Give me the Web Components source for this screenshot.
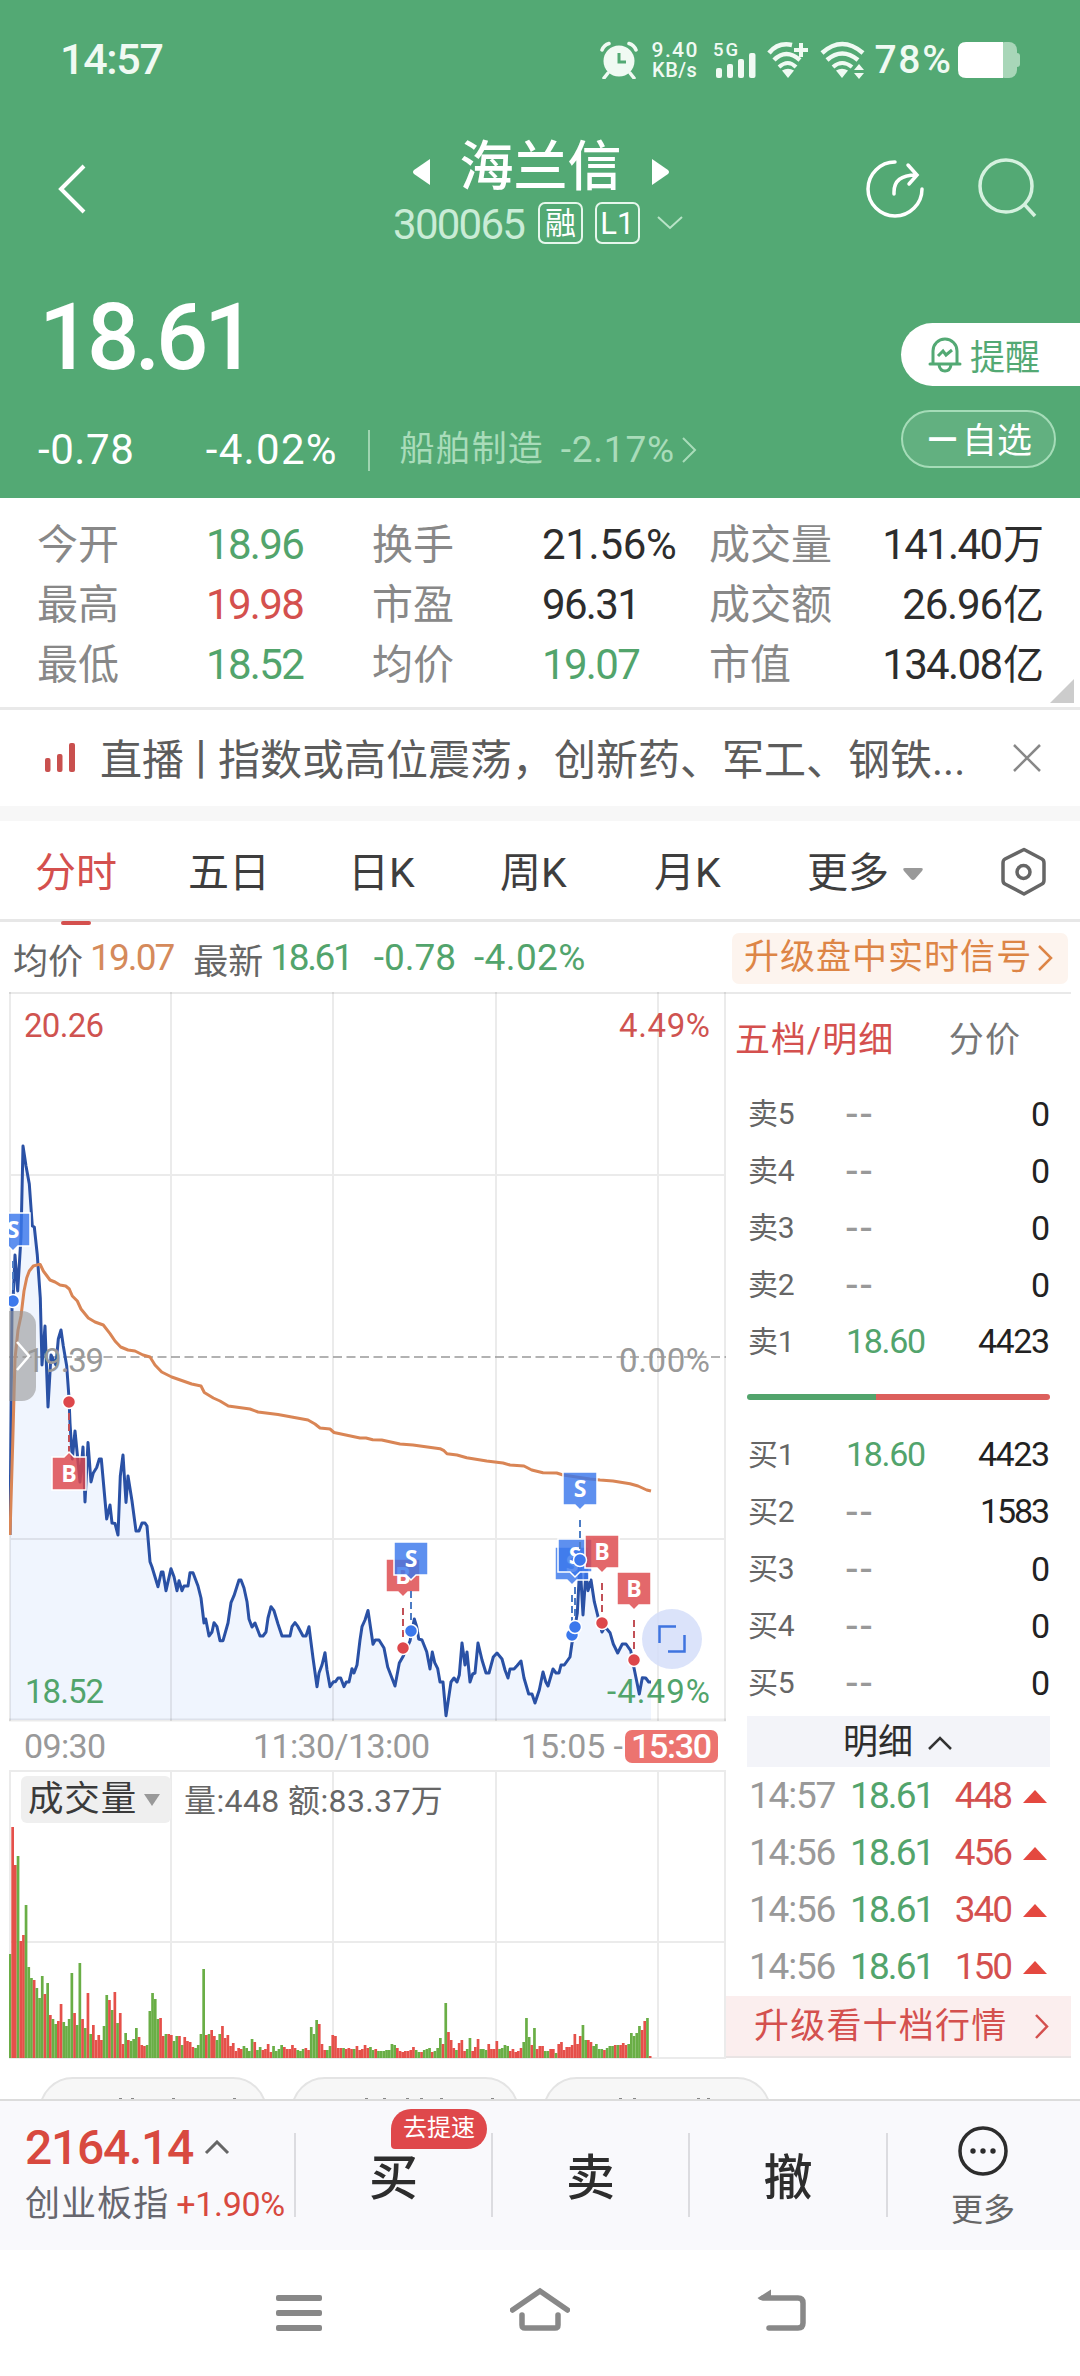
<!DOCTYPE html>
<html lang="zh-CN">
<head>
<meta charset="utf-8">
<title>海兰信 300065</title>
<style>
html, body {
    margin: 0;
    background: #fff;
}
body {
    width: 1080px;
    height: 2376px;
    overflow: hidden;
    font-family: Roboto, "Noto Sans CJK SC", sans-serif;
    --green: #53a974;
    --rise: #d4504e;
    --fall: #52a46c;
    --line: #e9e9e9;
}
</style>
</head>
<body>
<stock-page></stock-page>

<script>
// Shared base: subclasses only supply css() and html().
class BaseElement extends HTMLElement{
    constructor(){
        super();
        this.attachShadow({mode:"open"});
    }
    connectedCallback(){
        this.shadowRoot.innerHTML = `<style>
            * { box-sizing: border-box; }
            svg { display: block; flex: none; }
            ${this.css()}
            </style>${this.html()}`;
    }
    css(){ return ""; }
    html(){ return ""; }
}

// Text whose letter spacing is adjusted until it is "w" pixels wide.
class FitText extends BaseElement{
    css(){
        return `:host { display: inline-block; width: max-content; white-space: nowrap; flex: none; line-height: 1.2; }`;
    }
    html(){ return `<slot></slot>`; }
    connectedCallback(){
        super.connectedCallback();
        const size = parseFloat(this.getAttribute("size"));
        this.style.fontSize = size + "px";
        const target = parseFloat(this.getAttribute("w")) + size * 0.09;
        const count = this.textContent.length;
        const spacing = (target - this.getBoundingClientRect().width) / (count - 1);
        this.style.letterSpacing = spacing + "px";
        this.style.marginRight = -spacing + "px";
    }
}
customElements.define("fit-text", FitText);

class StatusBar extends BaseElement{
    css(){
        return `
        :host { display: flex; height: 120px; align-items: center; color: #f0faf3; padding: 0 59px 0 60px; font-weight: 500; }
        .spacer { flex: 1; }
        .speed { display: flex; flex-direction: column; align-items: center; width: 48px; margin: 0 15px 0 12px; line-height: 20px; }
        .speed fit-text { line-height: 20px; }
        .cell { margin-right: 10px; overflow: visible; }
        .wifi { margin-right: 10px; }
        .wifi + .wifi { margin-right: 8px; }
        `;
    }
    html(){
        return `
        <fit-text w="100" size="43">14:57</fit-text>
        <span class="spacer"></span>
        <svg width="38" height="38" viewBox="0 0 38 38" fill="none" stroke="currentColor">
            <circle cx="19" cy="20" r="15.5" fill="currentColor" stroke="none"/>
            <path d="M2 9 Q4 4 9 2.500M36 9 Q34 4 29 2.500" stroke-width="3.500" stroke-linecap="round"/>
            <path d="M8 32L4 37M30 32L34 37" stroke-width="3.500" stroke-linecap="round"/>
            <path d="M19 12V21H26" stroke="#53a974" stroke-width="3"/>
        </svg>
        <div class="speed"><fit-text w="44" size="21">9.40</fit-text><fit-text w="43" size="20">KB/s</fit-text></div>
        <svg class="cell" width="44" height="38" viewBox="0 0 44 38">
            <text x="0" y="15" font-size="18.500" font-weight="500" textLength="25" fill="currentColor">5G</text>
            <g fill="currentColor"><rect x="3" y="27" width="6" height="10" rx="2"/><rect x="14" y="23" width="6" height="14" rx="2"/><rect x="25" y="18" width="6" height="19" rx="2"/><rect x="36" y="12" width="6.500" height="25" rx="2"/></g>
        </svg>
        <svg class="wifi" width="43" height="38" viewBox="0 0 43 38" fill="none" stroke="currentColor" stroke-width="4.500">
            <path d="M2 12Q11 1 25 4"/><path d="M7 19Q19 7 33 19"/><path d="M12 26Q21 18 29 26" stroke-width="4"/>
            <path d="M21 37L15 29.500Q21 26 27 29.500Z" fill="currentColor" stroke="none"/>
            <path d="M34 2V16M27 9H41" stroke-width="4"/>
        </svg>
        <svg class="wifi" width="46" height="38" viewBox="0 0 46 38" fill="none" stroke="currentColor" stroke-width="4.500">
            <path d="M2 12Q22 -6 43 12"/><path d="M7 19Q22 6 38 19"/><path d="M13 26Q22 18 32 26" stroke-width="4"/>
            <path d="M22 37L16 29.500Q22 26 28 29.500Z" fill="currentColor" stroke="none"/>
            <path d="M34 29L39 23L44 29ZM34 32H44L39 38Z" fill="currentColor" stroke="none"/>
        </svg>
        <fit-text w="73" size="39">78%</fit-text>
        <svg width="64" height="38" viewBox="0 0 64 38" style="margin-left:6px">
            <rect x="40" y="1" width="20" height="36" rx="8" fill="#a8d6b8"/><rect x="57" y="12" width="6" height="14" rx="3" fill="#a8d6b8"/>
            <path d="M9 1H46V37H9Q1 37 1 29V9Q1 1 9 1Z" fill="#fff"/>
        </svg>`;
    }
}
customElements.define("status-bar", StatusBar);

class StockTitle extends BaseElement{
    css(){
        return `
        :host { display: grid; grid-template-columns: 300px 464px 1fr; height: 140px; color: #fff; }
        .back { padding: 44px 0 0 57px; }
        .mid { display: flex; flex-direction: column; align-items: center; padding-top: 16px; }
        .name { display: flex; align-items: center; gap: 30px; height: 60px; font-size: 54px; line-height: 60px; font-weight: 500; padding-left: 17px; }
        .name span { padding-top: 3px; }
        .code { display: flex; align-items: center; height: 42px; margin-top: 6px; color: #c9ecd6; padding-left: 12px; }
        .code fit-text { padding-top: 5px; }
        .tag { width: 45px; height: 42px; border: 2px solid #e6f7ec; border-radius: 7px; color: #fff; font-size: 31px; line-height: 39px; text-align: center; margin-left: 12px; }
        .code svg { margin-left: 17px; }
        .acts { display: flex; gap: 52px; padding: 37px 0 0 100px; }
        `;
    }
    html(){
        return `
        <div class="back"><svg width="30" height="50" viewBox="0 0 30 50" fill="none" stroke="#fff" stroke-width="4"><path d="M27 2L4 25L27 48"/></svg></div>
        <div class="mid">
            <div class="name">
                <svg width="18" height="26" style="margin-top:12px"><path d="M18 0V26L2 15Q0 13 2 11Z" fill="#fff"/></svg>
                <span>海兰信</span>
                <svg width="18" height="26" style="margin-top:12px"><path d="M0 0V26L16 15Q18 13 16 11Z" fill="#fff"/></svg>
            </div>
            <div class="code">
                <fit-text w="129" size="42">300065</fit-text>
                <span class="tag">融</span><span class="tag">L1</span>
                <svg width="26" height="14" fill="none" stroke="#b9e4c8" stroke-width="2"><path d="M1 1L13 12L25 1"/></svg>
            </div>
        </div>
        <div class="acts">
            <svg width="62" height="62" viewBox="0 0 62 62" fill="none" stroke="#fff" stroke-width="3.500" stroke-linecap="round">
                <path d="M31 5A27 27 0 1 0 58 32"/><path d="M30 37V35Q30 18 52 18M44 8L53 18L45 27"/>
            </svg>
            <svg width="62" height="62" viewBox="0 0 62 62" fill="none" stroke="#d5f1df" stroke-width="3.500">
                <circle cx="28" cy="29" r="26"/><path d="M46 47L57 59"/>
            </svg>
        </div>`;
    }
}
customElements.define("stock-title", StockTitle);

class StockQuote extends BaseElement{
    css(){
        return `
        :host { display: flex; justify-content: space-between; height: 238px; color: #fff; }
        .left { padding: 38px 0 0 38px; }
        .price { height: 80px; display: flex; align-items: center; font-weight: 500; padding-left: 1px; }
        .change { display: flex; align-items: center; height: 44px; margin-top: 50px; }
        .change > i { width: 2px; height: 41px; background: #9fd4b1; margin: 0 30px 0 31px; }
        .sector { display: flex; align-items: center; color: #a9dcba; }
        .right { padding-top: 63px; display: flex; flex-direction: column; gap: 24px; width: 179px; }
        .remind { height: 63px; border-radius: 32px 0 0 32px; background: #fff; color: var(--green); display: flex; align-items: center; padding-left: 26px; gap: 7px; font-size: 35px; }
        .watch { width: 155px; height: 58px; border: 2px solid #a5dcb8; border-radius: 29px; background: rgba(255,255,255,.09); font-size: 35px; line-height: 59px; padding-left: 25px; white-space: nowrap; }
        .watch span { font-size: 29px; margin-right: 5px; font-weight: 700; position: relative; top: -2px; }
        `;
    }
    html(){
        return `
        <div class="left">
            <div class="price"><fit-text w="209" size="92">18.61</fit-text></div>
            <div class="change">
                <fit-text w="92" size="42">-0.78</fit-text>
                <fit-text w="127" size="42" style="margin-left:72px">-4.02%</fit-text>
                <i></i>
                <div class="sector">
                    <fit-text w="140" size="35">船舶制造</fit-text>
                    <fit-text w="110" size="37" style="margin-left:18px">-2.17%</fit-text>
                    <svg width="15" height="26" fill="none" stroke="currentColor" stroke-width="2" style="margin-left:8px"><path d="M1 1L13 13L1 25"/></svg>
                </div>
            </div>
        </div>
        <div class="right">
            <div class="remind">
                <svg width="36" height="38" viewBox="0 0 36 38" fill="none" stroke="currentColor" stroke-width="3">
                    <path d="M3 28H33M6 28V15A12 12 0 0 1 30 15V28" stroke-linejoin="round" stroke-linecap="round"/><path d="M12 29Q13 35 18 35Q23 35 24 29"/>
                    <path d="M11 20L16 15L19 19L25 14" stroke-width="3"/>
                </svg>提醒
            </div>
            <div class="watch"><span>一</span>自选</div>
        </div>`;
    }
}
customElements.define("stock-quote", StockQuote);

class QuoteGrid extends BaseElement{
    css(){
        return `
        :host { display: block; height: 212px; padding: 17px 36px 0 37px; border-bottom: 3px solid var(--line); position: relative; background: #fff; }
        .row { display: grid; grid-template-columns: 169px 166px 170px 167px 1fr auto; height: 60px; align-items: center; font-size: 41px; color: #888; line-height: 54px; }
        .row > div { color: #2d2d2d; display: flex; align-items: center; }
        .row .g { color: var(--fall); } .row .r { color: var(--rise); }
        .row > div:last-child { justify-content: flex-end; }
        .corner { position: absolute; right: 6px; bottom: 4px; }
        `;
    }
    html(){
        const rows = [
            ["今开", "18.96", "g", 95, "换手", "21.56%", "", 131, "成交量", "141.40", "万", 117],
            ["最高", "19.98", "r", 95, "市盈", "96.31", "", 95, "成交额", "26.96", "亿", 97],
            ["最低", "18.52", "g", 95, "均价", "19.07", "g", 95, "市值", "134.08", "亿", 117],
        ];
        return rows.map(r => `<div class="row">
            <span>${r[0]}</span><div class="${r[2]}"><fit-text w="${r[3]}" size="42">${r[1]}</fit-text></div>
            <span>${r[4]}</span><div class="${r[6]}"><fit-text w="${r[7]}" size="42">${r[5]}</fit-text></div>
            <span>${r[8]}</span><div><fit-text w="${r[11]}" size="42">${r[9]}</fit-text>${r[10]}</div>
        </div>`).join("") + `<svg class="corner" width="24" height="24"><path d="M24 0V24H0Z" fill="#ccc"/></svg>`;
    }
}
customElements.define("quote-grid", QuoteGrid);

class LiveTicker extends BaseElement{
    css(){
        return `
        :host { display: flex; align-items: center; height: 111px; padding: 0 39px 0 44px; border-bottom: 15px solid #f7f7f7; background: #fff; color: #5c5c5c; font-size: 42px; line-height: 60px; }
        .text { flex: 1; margin-left: 24px; padding-top: 5px; white-space: nowrap; }
        .text i { font-style: normal; margin: 0 -4px; }
        `;
    }
    html(){
        return `
        <svg width="32" height="32" fill="#c9504e"><rect x="1" y="16" width="5.500" height="14" rx="2"/><rect x="13" y="12" width="5.500" height="18" rx="2"/><rect x="25" y="1" width="6" height="29" rx="2"/></svg>
        <div class="text">直播<i>丨</i>指数或高位震荡，创新药、军工、钢铁...</div>
        <svg width="28" height="28" stroke="#888" stroke-width="2.500"><path d="M1 1L27 27M27 1L1 27"/></svg>`;
    }
}
customElements.define("live-ticker", LiveTicker);

class PeriodTabs extends BaseElement{
    css(){
        return `
        :host { display: grid; grid-template-columns: 153px 160px 152px 154px 153px 194px 1fr; height: 101px; border-bottom: 3px solid #e7e7e7; padding-left: 35px; font-size: 41px; line-height: 105px; color: #3e3e3e; background: #fff; }
        .on { color: var(--rise); position: relative; }
        .on::after { content: ''; position: absolute; left: 26px; bottom: 1px; width: 30px; height: 4px; border-radius: 2px; background: #d4504e; }
        .more { display: flex; align-items: center; gap: 13px; }
        .set { padding-top: 26px; }
        `;
    }
    html(){
        return `<span class="on">分时</span><span>五日</span><span>日K</span><span>周K</span><span>月K</span>
        <span class="more">更多<svg width="22" height="14"><path d="M3 1H19Q22 1 20 4L13 12Q11 14 9 12L2 4Q0 1 3 1Z" fill="#999"/></svg></span>
        <span class="set"><svg width="46" height="50" viewBox="0 0 46 50" fill="none" stroke="#666" stroke-width="3.500" stroke-linejoin="round"><path d="M23 2.500L41 12Q43 13 43 16V33Q43 36 41 37L23 47L4 37Q2 36 2 33V16Q2 13 4 12Z"/><circle cx="22.500" cy="25" r="6.500"/></svg></span>`;
    }
}
customElements.define("period-tabs", PeriodTabs);

class PriceLegend extends BaseElement{
    css(){
        return `
        :host { display: flex; align-items: center; height: 70px; padding: 2px 12px 0 13px; font-size: 35px; color: #666; background: #fff; }
        .o { color: #d58a5b; } .g { color: var(--fall); }
        .signal { margin-left: auto; display: flex; align-items: center; width: 336px; height: 51px; border-radius: 7px; background: #fdf4ee; color: #dd8546; padding-left: 12px; gap: 7px; }
        `;
    }
    html(){
        return `<span>均价</span>
        <fit-text class="o" w="82" size="37" style="margin-left:7px">19.07</fit-text>
        <span style="margin-left:18px">最新</span>
        <fit-text class="g" w="80" size="37" style="margin-left:7px">18.61</fit-text>
        <fit-text class="g" w="79" size="37" style="margin-left:20px">-0.78</fit-text>
        <fit-text class="g" w="108" size="37" style="margin-left:18px">-4.02%</fit-text>
        <div class="signal"><fit-text w="284" size="35">升级盘中实时信号</fit-text>
            <svg width="15" height="26" fill="none" stroke="currentColor" stroke-width="2.500"><path d="M1 1L13 13L1 25"/></svg></div>`;
    }
}
customElements.define("price-legend", PriceLegend);

const PRICE = `10,1535 12,1308 13,1301 15,1255 17.7,1291 21,1237 23,1146 26,1166 29.3,1184 32.3,1226 34.3,1227 37.3,1255 40.3,1298 42,1365 45,1326 48,1407 51,1355 56,1365 58.3,1339 61,1330 63.3,1346 66.7,1366 69,1398 70,1423 72.3,1459 75,1431 80,1482 83,1447 85,1502 88,1442.5 91,1482 93.3,1473 96.7,1467.5 99.3,1459 101.3,1459 106.7,1519 110,1505 112,1523 115,1523.5 118,1535 120.3,1476 123,1455 126,1502.5 128,1476 132,1501 136,1531 139,1531 142,1523 145,1523 147,1526 150,1561.7 152,1567 158,1586.7 161.3,1572 163,1572 166,1590.7 171,1568.7 174,1576.7 177,1590.7 179,1580.7 182,1590.7 184,1586 188,1586 190,1572.7 193,1572.7 198,1586 201,1598 204,1623 205.7,1619 209,1636 212,1632 214,1622.7 217,1626.7 220,1640.7 223,1640.7 228,1623 231,1602.7 234,1595.7 239,1580 241,1580 244,1588 247,1601.7 249,1619 252,1627 255,1623 260,1636 263,1636 266,1632 268,1618 271,1606.7 274,1610.7 278,1624 282,1636 290,1636 292,1626.7 295,1622.7 298,1626.7 303,1636 306,1636 309,1626.7 313,1658 317,1686.7 319,1673 322,1665 325,1652.7 327,1670 330,1686.7 333.5,1681.7 335.5,1681.7 338,1678 340.7,1678 344,1686.7 346.3,1682 349,1682 352,1668.7 354,1673 357,1665 360,1640 362,1626.7 365,1620 368,1610.5 373,1644.3 375.3,1640 379,1640 384,1648 387.7,1667 395,1686 399.3,1663 403.3,1656 410,1641 414.3,1619 416.7,1626.7 418.7,1639 422,1640 426.7,1651.7 430,1669 432.3,1652 434.7,1662.7 437.7,1668.7 440,1682 443,1682 446,1715.7 451,1682 454,1678 457,1682 459.3,1675 462,1643 465,1665 467,1652 470,1682 472.7,1674 475,1673 478,1643 482,1660 486,1673 489,1673 493.3,1657 497,1653 502,1659 505,1670 508,1678 510,1669 514,1669 517,1665.7 521,1661 524,1678 528.7,1694 532,1694 535,1703 539.3,1690 543,1672 545.7,1681.7 548,1686 553,1669 556,1673 559,1673 561,1665 564.3,1665 570,1657 572,1643 575,1626.7 577.3,1613 580,1562 583,1615 586,1572 588,1590.7 591,1580 594.3,1601.7 598,1616.7 602,1632 605,1626.7 610,1632.7 613.3,1644 617.7,1653 622.3,1644 626,1644 630.7,1650.7 634,1668 639.3,1694 642.3,1677.7 645.7,1678 648.7,1682 651,1682`;

const AVERAGE = `10,1535 12.7,1444 15,1358.6 18,1330 21,1316 24,1291 26.7,1278 29.3,1271 33.3,1266 38.3,1264.6 40.3,1264.6 43.3,1271 50,1280 55,1282 60,1285 65.7,1286 69.3,1289 72.3,1296 77.3,1301 81,1309 88.3,1318 95,1322 103.3,1325 110,1333.6 115,1341 120.7,1347 128,1350 135,1351 143,1355 150,1357 155,1365 161.7,1372 171.7,1377 191.7,1384 201,1386 204.3,1392.5 213.3,1398 220,1401 228.3,1406 250,1409 258,1412 278,1414.6 308,1420 315,1424 320,1428 330,1429 334,1432.5 360,1438 366,1438 372.7,1439.7 381.7,1440 400,1444 413,1445 440,1448.7 444,1450.7 447,1453.7 457,1455 466.7,1457.7 486.7,1461 503,1463 510,1465 524,1466 531.7,1470 543,1472.7 556.7,1473 563,1475 590,1479 600,1480 613,1481 630,1483.7 638,1486 646.7,1490 651,1491`;

// kind, x, top of the flag, y of the dot on the line
const TRADES = [
    ["S", 13, 1213, 1301],
    ["B", 69, 1457, 1402],
    ["B", 403, 1559, 1648],
    ["S", 411, 1542, 1631],
    ["S", 572, 1547, 1635],
    ["S", 575, 1539, 1627],
    ["B", 602, 1535, 1623],
    ["B", 634, 1572, 1660],
    ["S", 580, 1472, 1560],
];

class MinuteChart extends BaseElement{
    css(){
        return `
        :host { display: block; height: 729px; position: relative; }
        .zoom { position: absolute; left: 633px; top: 617px; width: 60px; height: 60px; border-radius: 50%; background: rgba(213,222,249,.85); display: grid; place-items: center; }
        .pull { position: absolute; left: 0; top: 319px; width: 27px; height: 90px; border-radius: 0 14px 14px 0; background: rgba(150,150,150,.6); display: grid; place-items: center; }
        .plot { position: absolute; left: 0; top: 0; }
        text { font-size: 33px; }
        .flag { font-size: 23px; font-weight: 700; fill: #fff; text-anchor: middle; font-family: "Open Sans", sans-serif; }
        `;
    }
    flag([kind, x, top, dot]){
        const color = kind === "S" ? "#3b78ec" : "#dd474b";
        const below = top > dot;
        const tip = below
            ? `M${x-17} ${top}H${x-5}L${x} ${top-5}L${x+5} ${top}H${x+17}V${top+33}H${x-17}Z`
            : `M${x-17} ${top}H${x+17}V${top+33}H${x+5}L${x} ${top+38}L${x-5} ${top+33}H${x-17}Z`;
        return `<path d="M${x} ${dot}V${below ? top - 4 : top + 46}" stroke="${kind === "S" ? "#4c7cc4" : "#c25057"}" stroke-width="2" stroke-dasharray="7 4"/>
            <path d="${tip}" fill="${color}" fill-opacity=".82" stroke="#fff" stroke-width="1.500"/>
            <text class="flag" x="${x}" y="${top+25}">${kind}</text>
            <circle cx="${x}" cy="${dot}" r="6.500" fill="${color}" stroke="#fff" stroke-width="1.500"/>`;
    }
    html(){
        const verticals = [10, 171, 333, 496, 658, 725].map(x => `M${x} 992V1721`).join("");
        return `
        <svg class="plot" width="717" height="730" viewBox="9 992 717 730">
            <polygon points="10,1720 ${PRICE} 651,1720" fill="#f0f5fe"/>
            <path d="${verticals}M9 1175H726M9 1539H726" stroke="#000" stroke-opacity=".08" stroke-width="2" fill="none"/>
            <path d="M9 1720H726" stroke="#000" stroke-opacity=".08" stroke-width="3"/>
            <path d="M9 1357H726" stroke="#999" stroke-width="1.700" stroke-dasharray="9 4.500"/>
            <polyline points="${PRICE}" fill="none" stroke="#2a51a5" stroke-width="3" stroke-linejoin="round"/>
            <polyline points="${AVERAGE}" fill="none" stroke="#d98555" stroke-width="3" stroke-linejoin="round"/>
            <text x="24" y="1037" textLength="80" fill="#cf5350">20.26</text>
            <text x="619" y="1037" textLength="91" fill="#cf5350">4.49%</text>
            <text x="26" y="1372" textLength="78" fill="#999">19.39</text>
            <text x="619" y="1372" textLength="91" fill="#999">0.00%</text>
            <text x="25" y="1703" textLength="79" fill="#52a46c">18.52</text>
            ${TRADES.map(t => this.flag(t)).join("")}
            <text x="607" y="1703" textLength="103" fill="#52a46c">-4.49%</text>
        </svg>
        <div class="pull"><svg width="16" height="30" fill="none" stroke="#fff" stroke-width="2.500"><path d="M2 1L14 15L2 29"/></svg></div>
        <div class="zoom"><svg width="28" height="28" fill="none" stroke="#3f74df" stroke-width="2.500"><path d="M18 1.500H1.500V18M10 26.500H26.500V10"/></svg></div>`;
    }
}
customElements.define("minute-chart", MinuteChart);

class TimeAxis extends BaseElement{
    css(){
        return `
        :host { display: flex; align-items: center; height: 49px; padding: 2px 8px 0 15px; color: #999; font-size: 34px; }
        .now { background: #ec7470; color: #fff; width: 93px; height: 33px; border-radius: 7px; display: flex; align-items: center; justify-content: center; font-weight: 500; margin-left: 2px; }
        `;
    }
    html(){
        return `<fit-text w="79" size="34">09:30</fit-text>
        <fit-text w="174" size="34" style="margin-left:147px">11:30/13:00</fit-text>
        <fit-text w="99" size="34" style="margin-left:auto">15:05 -</fit-text>
        <div class="now"><fit-text w="78" size="34">15:30</fit-text></div>`;
    }
}
customElements.define("time-axis", TimeAxis);

// One bar per minute, g = falling, r = rising, number = height in px
const VOLUME = `g104 r231 r193 g202 r117 r123 g153 g91 g80 r78 g70 g60 g82 r64 g75 r43 g39 g34 r37 r54 g36 g32 g39 g85 r45 g33 g95 r39 g30 r65 g24 r33 r18 r23 r18 g32 g63 r58 g48 r66 g35 r45 r14 g25 r18 g17 g19 g30 r21 r13 r12 g13 g47 g65 g59 g39 r40 r22 g24 r24 r23 g17 g22 r22 g13 r21 r17 r16 r11 g10 g13 g24 g89 r23 g24 r28 r22 g18 g24 r32 r20 r23 r12 r15 r7 r10 r9 g12 g10 g7 g19 r16 g8 g11 r8 r9 r14 r6 g12 g7 g9 g13 r11 r9 r9 r13 r10 g8 g7 g9 r10 r8 g31 g24 g38 r34 r14 r8 g8 g12 r23 r22 r10 r10 g10 r9 r10 r9 g9 r12 r8 r9 r13 r10 g11 g8 r9 g7 g7 g7 g8 g8 g14 g13 r10 r7 r6 r7 r7 r8 r11 g8 g6 r6 g8 g9 g10 r6 g7 g10 g20 r14 g55 r26 r18 r10 g8 r15 r18 r7 g9 g20 r7 r11 r19 g9 g9 g8 r14 r9 r9 r17 g9 g10 g13 g12 r7 r9 r6 r7 r10 g16 g40 g21 r13 g30 r9 r12 r12 g7 g7 r9 r9 g5 r14 r16 r8 r11 r11 r13 r24 r14 r22 g33 g18 r18 r16 g12 g14 g9 g9 r8 g10 g12 g12 r13 g13 r13 r15 r13 g14 g25 g22 g25 g32 r28 r37 g40 r2`;

class VolumeChart extends BaseElement{
    css(){
        return `
        :host { display: block; height: 289px; position: relative; }
        svg.plot { position: absolute; left: 0; top: 0; }
        .head { position: relative; display: flex; align-items: center; padding: 6px 0 0 12px; color: #666; }
        .pick { width: 150px; height: 47px; border-radius: 6px; background: #efefef; color: #3a3a3a; display: flex; align-items: center; padding-left: 7px; gap: 8px; }
        .sum { margin-left: 13px; padding-top: 3px; }
        `;
    }
    html(){
        const step = 2.69;
        const bars = VOLUME.split(" ").map((bar, i) => {
            const h = Number(bar.slice(1));
            return `<rect x="${(10 + i * step - 1.4).toFixed(1)}" y="${2057 - h}" width="2.700" height="${h}" fill="${bar[0] === "g" ? "#6aae46" : "#e5504a"}"/>`;
        }).join("");
        const verticals = [10, 171, 333, 496, 658, 725].map(x => `M${x} 1770V2058`).join("");
        return `
        <svg class="plot" width="717" height="289" viewBox="9 1769 717 289">
            <path d="${verticals}M9 1770H726M9 1941H726M9 2057H726" stroke="#ebebeb" stroke-width="2" fill="none"/>
            ${bars}
        </svg>
        <div class="head">
            <div class="pick"><fit-text w="105" size="35.500">成交量</fit-text><svg width="16" height="12"><path d="M0 0H16L8 12Z" fill="#999"/></svg></div>
            <fit-text class="sum" w="256" size="32">量:448 额:83.37万</fit-text>
        </div>`;
    }
}
customElements.define("volume-chart", VolumeChart);

class OrderBook extends BaseElement{
    css(){
        return `
        :host { display: flex; flex-direction: column; height: 1066px; padding-top: 1px; }
        .tabs { display: flex; height: 92px; align-items: center; justify-content: space-between; padding: 3px 51px 0 9px; color: #777; }
        .tabs .on { color: var(--rise); }
        .row { display: grid; grid-template-columns: 98px 1fr auto; height: 57px; align-items: center; padding: 0 21px 0 22px; color: #666; }
        .row .p { color: #999; } .row .p.has { color: var(--fall); }
        .row .q { color: #222; font-size: 34px; }
        .ratio { height: 6px; margin: 24px 21px 26px 21px; border-radius: 3px; background: linear-gradient(90deg, #52a46c 0 42.500%, #dc5f5c 42.500%); }
        .fold { display: flex; align-items: center; justify-content: center; gap: 15px; margin: 5px 21px 0 21px; height: 51px; background: #f3f4f9; color: #2d2d2d; padding: 2px 2px 0 0; }
        .deal { display: grid; grid-template-columns: 101px 1fr auto 34px; height: 57px; align-items: center; padding: 1px 24px 0 23px; color: #999; }
        .deal svg { justify-self: end; }
        .deal .g { color: var(--fall); } .deal .r { color: var(--rise); }
        .up { margin-top: auto; height: 62px; background: #fbeeee; border-bottom: 2px solid #e9e4e4; color: var(--rise); display: flex; align-items: center; justify-content: space-between; padding: 1px 22px 0 28px; }
        `;
    }
    row([name, price, qty, w]){
        const cell = price ? `<fit-text w="77" size="34">${price}</fit-text>` : `<fit-text w="22" size="42" style="line-height:40px">--</fit-text>`;
        const amount = w ? `<fit-text w="${w}" size="34">${qty}</fit-text>` : qty;
        return `<div class="row"><fit-text w="44" size="30">${name}</fit-text><span class="p ${price ? "has" : ""}">${cell}</span><span class="q">${amount}</span></div>`;
    }
    html(){
        const asks = [["卖5", "", "0"], ["卖4", "", "0"], ["卖3", "", "0"], ["卖2", "", "0"], ["卖1", "18.60", "4423", 69]];
        const bids = [["买1", "18.60", "4423", 69], ["买2", "", "1583", 67], ["买3", "", "0"], ["买4", "", "0"], ["买5", "", "0"]];
        const deals = [["14:57", "448"], ["14:56", "456"], ["14:56", "340"], ["14:56", "150"]];
        return `
        <div class="tabs"><fit-text class="on" w="155" size="35">五档/明细</fit-text><fit-text w="68" size="35">分价</fit-text></div>
        ${asks.map(this.row).join("")}
        <div class="ratio"></div>
        ${bids.map(this.row).join("")}
        <div class="fold"><fit-text w="67" size="35">明细</fit-text><svg width="24" height="14" fill="none" stroke="#333" stroke-width="2.500"><path d="M1 13L12 2L23 13"/></svg></div>
        ${deals.map(([time, qty]) => `<div class="deal"><fit-text w="84" size="37">${time}</fit-text><fit-text class="g" w="82" size="37">18.61</fit-text>
            <fit-text class="r" w="55" size="37">${qty}</fit-text><svg width="24" height="13"><path d="M12 0L24 13H0Z" fill="#e4483f"/></svg></div>`).join("")}
        <div class="up"><fit-text w="249" size="35">升级看十档行情</fit-text><svg width="14" height="25" fill="none" stroke="currentColor" stroke-width="2.500"><path d="M1 1L12 12.500L1 24"/></svg></div>`;
    }
}
customElements.define("order-book", OrderBook);

class ChipRow extends BaseElement{
    css(){
        return `
        :host { display: flex; gap: 24px; height: 40px; padding: 18px 0 0 39px; overflow: hidden; background: #fff; }
        div { width: 228px; height: 68px; flex: none; border: 2px solid #e4e4e4; border-radius: 38px; background: #f7f7f7; padding-top: 19px; }
        `;
    }
    html(){
        // only the upper edge of each label shows above the trade bar
        return [[78, 90, 131, 192], [72, 90, 113, 127, 147, 198], [74, 88, 152, 162]].map(marks => `<div><svg width="224" height="2">
            ${marks.map(x => `<rect x="${x}" y="0" width="3" height="2" fill="#888"/>`).join("")}</svg></div>`).join("");
    }
}
customElements.define("chip-row", ChipRow);

class TradeBar extends BaseElement{
    css(){
        return `
        :host { display: grid; grid-template-columns: 294px 197px 197px 198px 1fr; height: 151px; border-top: 2px solid #dcdcdc; background: #f9f9fc; }
        .index { padding: 18px 0 0 25px; }
        .index div { display: flex; align-items: center; height: 57px; white-space: nowrap; }
        .red { color: #d8493f; }
        .act { position: relative; font-size: 49px; font-weight: 500; color: #2d2d2d; text-align: center; line-height: 156px; padding-left: 2px; }
        .act::before, .more::before { content: ''; position: absolute; left: 0; top: 32px; width: 2px; height: 84px; background: #dcdce0; }
        .badge { position: absolute; left: 97px; top: 8px; width: 96px; height: 40px; border-radius: 20px 20px 20px 4px; background: #df484b; color: #fff; font-size: 24px; line-height: 39px; font-weight: 400; }
        .more { position: relative; display: flex; flex-direction: column; align-items: center; color: #666; font-size: 32px; line-height: 40px; gap: 13px; padding-top: 24px; }
        `;
    }
    html(){
        return `
        <div class="index">
            <div><fit-text class="red" w="165" size="48" style="font-weight:500">2164.14</fit-text><svg width="26" height="15" fill="none" stroke="#666" stroke-width="3" style="margin-left:10px"><path d="M2 13L13 2L24 13"/></svg></div>
            <div style="color:#66666e"><fit-text w="140" size="35">创业板指</fit-text><fit-text class="red" w="106" size="34" style="margin-left:8px">+1.90%</fit-text></div>
        </div>
        <div class="act">买<span class="badge">去提速</span></div>
        <div class="act">卖</div>
        <div class="act">撤</div>
        <div class="more"><svg width="52" height="52" viewBox="0 0 52 52" fill="none" stroke="#2d2d2d" stroke-width="3.500"><circle cx="26" cy="26" r="23"/><g fill="#2d2d2d" stroke="none"><circle cx="16" cy="26" r="2.700"/><circle cx="26" cy="26" r="2.700"/><circle cx="36" cy="26" r="2.700"/></g></svg>更多</div>`;
    }
}
customElements.define("trade-bar", TradeBar);

class NavBar extends BaseElement{
    css(){
        return `
        :host { display: flex; justify-content: center; gap: 187px; height: 126px; background: #fff; padding: 36px 0 0 1px; }
        `;
    }
    html(){
        return `
        <svg width="48" height="46" fill="#888"><rect x="1" y="9" width="46" height="6" rx="2"/><rect x="1" y="24" width="46" height="6" rx="2"/><rect x="1" y="39" width="46" height="6" rx="2"/></svg>
        <svg width="60" height="46" fill="none" stroke="#888" stroke-width="5.500"><path d="M2.500 24L30 5L57.500 24" stroke-linecap="round"/><path d="M12 29V39Q12 42 15 42H45Q48 42 48 39V29" stroke-linecap="round"/></svg>
        <svg width="50" height="46" fill="none" stroke="#888" stroke-width="5.500" stroke-linecap="round"><path d="M12 42H41Q46 42 46 37V17Q46 12 41 12H6"/><path d="M0.500 12L14 3.500V14H3Z" fill="#888" stroke="none"/></svg>`;
    }
}
customElements.define("nav-bar", NavBar);

class StockPage extends BaseElement{
    css(){
        return `
        :host { display: flex; flex-direction: column; width: 1080px; height: 2376px; }
        :host > *, header, main, quote-grid, live-ticker, period-tabs, price-legend, chip-row, trade-bar, nav-bar { flex: none; box-sizing: border-box; }
        header { background: var(--green); height: 498px; }
        main { display: grid; grid-template-columns: 717px 345px; padding-left: 9px; height: 1067px; }
        main::before { content: ''; grid-column: 1 / 3; height: 2px; background: #e9e9e9; margin-bottom: -2px; }
        `;
    }
    html(){
        return `
        <header><status-bar></status-bar><stock-title></stock-title><stock-quote></stock-quote></header>
        <quote-grid></quote-grid>
        <live-ticker></live-ticker>
        <period-tabs></period-tabs>
        <price-legend></price-legend>
        <main>
            <section><minute-chart></minute-chart><time-axis></time-axis><volume-chart></volume-chart></section>
            <order-book></order-book>
        </main>
        <chip-row></chip-row>
        <trade-bar></trade-bar>
        <nav-bar></nav-bar>`;
    }
}
customElements.define("stock-page", StockPage);
</script>
</body>
</html>
